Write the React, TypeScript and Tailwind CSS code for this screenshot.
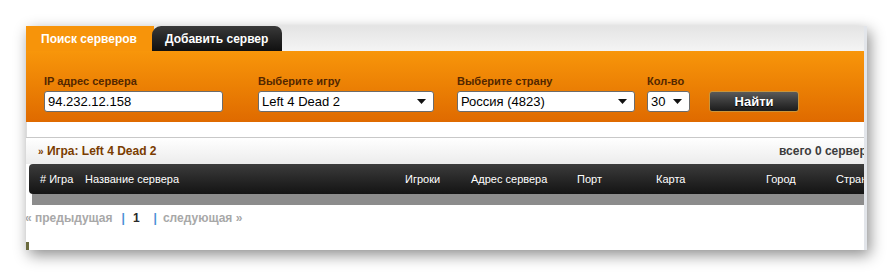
const font = { fontFamily: '"Liberation Sans", Arial, sans-serif' };

function Arrow() {
  return (
    <svg width="9" height="5" viewBox="0 0 9 5" className="shrink-0">
      <path d="M0 0 H9 L4.5 5 Z" fill="#111" />
    </svg>
  );
}

function Field({ label, width, value, select }: { label: string; width: string; value: string; select?: boolean }) {
  return (
    <div className={`${width} shrink-0`}>
      <div className="h-[14px] text-[11px] leading-[14px] font-bold text-[#532700]">{label}</div>
      <div className="mt-[3px] flex h-[21px] items-center justify-between rounded-[3px] border border-[#6b6b6b] bg-white pl-[3px] pr-[7px] text-[13px] text-black">
        <span className="whitespace-nowrap">{value}</span>
        {select && <Arrow />}
      </div>
    </div>
  );
}

const columns: [string, string][] = [
  ["# Игра", "w-[45px]"],
  ["Название сервера", "w-[320px]"],
  ["Игроки", "w-[66px]"],
  ["Адрес сервера", "w-[106px]"],
  ["Порт", "w-[79px]"],
  ["Карта", "w-[110px]"],
  ["Город", "w-[70px]"],
  ["Страна", "w-[60px]"],
];

export default function App() {
  return (
    <div className="h-[276px] w-[894px] overflow-hidden bg-white pl-[26px] pt-[26px]" style={font}>
      <div className="relative h-[224px] w-[841px] overflow-hidden border-r-[3px] border-[#e2e5ea] bg-white shadow-[3px_5px_14px_rgba(0,0,0,0.45)]">
        {/* tabs */}
        <div className="flex h-[25px] items-end bg-gradient-to-b from-[#e4e4e4] to-[#f4f4f4]">
          <div className="flex h-[25px] w-[128px] items-center bg-[#f7940a] pl-[15px] text-[12px] font-bold text-white">
            Поиск серверов
          </div>
          <div className="-ml-[2px] flex h-[25px] w-[130px] items-center rounded-tl-[9px] rounded-tr-[7px] bg-gradient-to-b from-[#3a3a3a] to-[#101010] pl-[13px] text-[12px] font-bold text-white">
            Добавить сервер
          </div>
        </div>

        {/* search panel */}
        <div className="flex h-[71px] items-start bg-gradient-to-b from-[#f8960a] to-[#df6a00] pl-[18px] pt-[23px]">
          <Field label="IP адрес сервера" width="w-[179px]" value="94.232.12.158" />
          <div className="ml-[35px]">
            <Field label="Выберите игру" width="w-[176px]" value="Left 4 Dead 2" select />
          </div>
          <div className="ml-[23px]">
            <Field label="Выберите страну" width="w-[178px]" value="Россия (4823)" select />
          </div>
          <div className="ml-[12px]">
            <Field label="Кол-во" width="w-[43px]" value="30" select />
          </div>
          <div className="ml-[19px] mt-[17px] flex h-[21px] w-[90px] items-center justify-center rounded-[3px] border border-[#c9953c] bg-gradient-to-b from-[#5a5a5a] to-[#1c1c1c] text-[13px] font-bold text-white [text-shadow:0_1px_1px_#000]">
            Найти
          </div>
        </div>

        <div className="h-[15px] border-l border-[#dcdcdc]" />
        <div className="h-px bg-[#c8c8c8]" />

        {/* section title */}
        <div className="flex h-[26px] items-center bg-gradient-to-b from-white to-[#ececec] pl-[12px] text-[12px] font-bold whitespace-nowrap">
          <div className="w-[741px] shrink-0 text-[#7a3c00]">
            <span className="text-[10px]">»</span> Игра: Left 4 Dead 2
          </div>
          <div className="shrink-0 text-[#3c3c3c]">всего 0 серверов</div>
        </div>

        {/* table header */}
        <div className="ml-[3px] flex h-[30px] items-center rounded-l-[4px] bg-gradient-to-b from-[#3c3c3c] to-[#141414] pl-[11px] text-[11px] whitespace-nowrap text-white">
          {columns.map(([name, w]) => (
            <span key={name} className={`${w} shrink-0`}>
              {name}
            </span>
          ))}
        </div>
        <div className="ml-[6px] h-[11px] bg-[#8c8c8c]" />

        {/* pagination */}
        <div className="-ml-[1px] flex h-[26px] items-center text-[12px] font-bold whitespace-nowrap">
          <span className="text-[#a8a8a8]">« предыдущая</span>
          <span className="ml-[9px] text-[#4a8fd6]">|</span>
          <span className="ml-[8px] text-[#2a2a2a]">1</span>
          <span className="ml-[14px] text-[#4a8fd6]">|</span>
          <span className="ml-[6px] text-[#a8a8a8]">следующая »</span>
        </div>

        <div className="absolute bottom-0 left-0 h-[8px] w-[3px] bg-[#6b6b3e]" />
      </div>
    </div>
  );
}
